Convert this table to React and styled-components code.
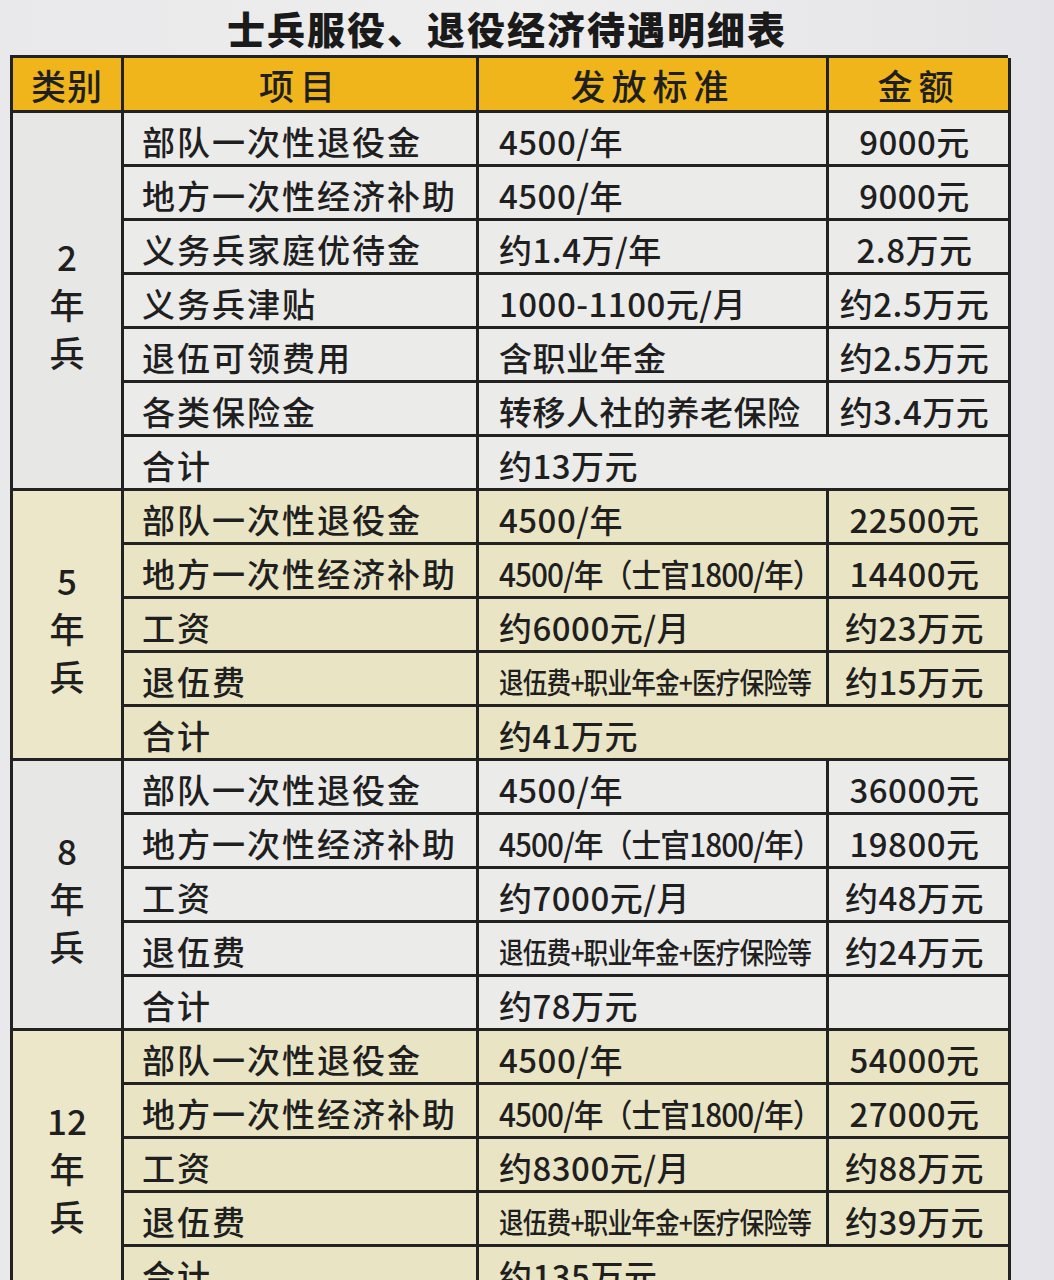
import React from 'react';
import styled, { createGlobalStyle } from 'styled-components';

const GlobalStyle = createGlobalStyle`
  html, body {
    margin: 0;
    padding: 0;
    height: 1280px;
    overflow: hidden;
    background: #e6e6e9;
  }
  body {
    font-family: "Noto Sans CJK SC", "Noto Sans", sans-serif;
    color: #1f1f1f;
  }
`;

const sections = [
  {
    label: ['2', '年', '兵'],
    tone: 'grey',
    rows: [
      ['部队一次性退役金', '4500/年', '9000元'],
      ['地方一次性经济补助', '4500/年', '9000元'],
      ['义务兵家庭优待金', '约1.4万/年', '2.8万元'],
      ['义务兵津贴', '1000-1100元/月', '约2.5万元'],
      ['退伍可领费用', '含职业年金', '约2.5万元'],
      ['各类保险金', '转移人社的养老保险', '约3.4万元'],
      ['合计', '约13万元', null],
    ],
  },
  {
    label: ['5', '年', '兵'],
    tone: 'khaki',
    rows: [
      ['部队一次性退役金', '4500/年', '22500元'],
      ['地方一次性经济补助', '4500/年（士官1800/年）', '14400元', 'compact'],
      ['工资', '约6000元/月', '约23万元'],
      ['退伍费', '退伍费+职业年金+医疗保险等', '约15万元', 'narrow'],
      ['合计', '约41万元', null],
    ],
  },
  {
    label: ['8', '年', '兵'],
    tone: 'grey',
    rows: [
      ['部队一次性退役金', '4500/年', '36000元'],
      ['地方一次性经济补助', '4500/年（士官1800/年）', '19800元', 'compact'],
      ['工资', '约7000元/月', '约48万元'],
      ['退伍费', '退伍费+职业年金+医疗保险等', '约24万元', 'narrow'],
      ['合计', '约78万元', ''],
    ],
  },
  {
    label: ['12', '年', '兵'],
    tone: 'khaki',
    rows: [
      ['部队一次性退役金', '4500/年', '54000元'],
      ['地方一次性经济补助', '4500/年（士官1800/年）', '27000元', 'compact'],
      ['工资', '约8300元/月', '约88万元'],
      ['退伍费', '退伍费+职业年金+医疗保险等', '约39万元', 'narrow'],
      ['合计', '约135万元', null],
    ],
  },
];

const tones = {
  grey: { cell: '#ebebea', label: '#e7e7e6' },
  khaki: { cell: '#e9e5c4', label: '#ebe7c8' },
};

export default function App() {
  return (
    <Page>
      <GlobalStyle />
      <Title>士兵服役、退役经济待遇明细表</Title>
      <Table>
        <HeadCell>类别</HeadCell>
        <HeadCell>项目</HeadCell>
        <HeadCell>发放标准</HeadCell>
        <HeadCell>金额</HeadCell>
        {sections.map((sec) => (
          <React.Fragment key={sec.label.join('')}>
            <LabelCell $rows={sec.rows.length} $bg={tones[sec.tone].label}>
              {sec.label.map((ch) => (
                <span key={ch}>{ch}</span>
              ))}
            </LabelCell>
            {sec.rows.map(([item, standard, amount, fit]) => (
              <React.Fragment key={item + standard}>
                <ItemCell $bg={tones[sec.tone].cell}>{item}</ItemCell>
                <StandardCell $bg={tones[sec.tone].cell} $span={amount === null}>
                  <Squeeze $fit={fit}>{standard}</Squeeze>
                </StandardCell>
                {amount !== null && (
                  <AmountCell $bg={tones[sec.tone].cell}>{amount}</AmountCell>
                )}
              </React.Fragment>
            ))}
          </React.Fragment>
        ))}
      </Table>
    </Page>
  );
}

const Page = styled.div`
  width: 1054px;
  padding: 0 0 0 10px;
  box-sizing: border-box;
  background: linear-gradient(90deg, #e9e9eb 0%, #eeeeee 50%, #e4e4e8 100%);
`;

const Title = styled.h1`
  margin: 0;
  height: 55px;
  padding-right: 50px;
  display: flex;
  align-items: center;
  justify-content: center;
  font-size: 38px;
  font-weight: 900;
  letter-spacing: 2px;
  color: #1a1a1a;
`;

const Table = styled.div`
  display: grid;
  width: 998px;
  grid-template-columns: 111px 355px 350px 182px;
  grid-template-rows: 55px;
  grid-auto-rows: 54px;
  border-left: 3px solid #222;
  border-top: 3px solid #222;
  box-sizing: border-box;
`;

const Cell = styled.div`
  display: flex;
  align-items: center;
  border-right: 3px solid #222;
  border-bottom: 3px solid #222;
  background: ${(p) => p.$bg || '#ebebea'};
  font-size: 33px;
  font-weight: 500;
  white-space: nowrap;
  overflow: hidden;
  min-width: 0;
`;

const HeadCell = styled(Cell)`
  background: #efb51a;
  justify-content: center;
  font-size: 35px;
  letter-spacing: 6px;
  &:first-child {
    letter-spacing: 1px;
  }
`;

const LabelCell = styled(Cell)`
  grid-row: span ${(p) => p.$rows};
  flex-direction: column;
  justify-content: center;
  font-size: 35px;
  line-height: 48px;
  padding-top: 6px;
  box-sizing: border-box;
`;

const ItemCell = styled(Cell)`
  padding-left: 18px;
  letter-spacing: 2px;
  padding-top: 4px;
`;

const StandardCell = styled(Cell)`
  grid-column: span ${(p) => (p.$span ? 2 : 1)};
  padding-left: 20px;
  letter-spacing: 0.5px;
  padding-top: 4px;
`;

const Squeeze = styled.span`
  display: inline-block;
  transform-origin: left center;
  font-size: ${(p) => (p.$fit === 'narrow' ? '29px' : p.$fit === 'compact' ? '32px' : '33px')};
  transform: ${(p) =>
    p.$fit === 'narrow' ? 'scaleX(0.85)' : p.$fit === 'compact' ? 'scaleX(0.93)' : 'none'};
  letter-spacing: ${(p) => (p.$fit ? '-1px' : '0.5px')};
`;

const AmountCell = styled(Cell)`
  justify-content: center;
  padding-top: 4px;
  padding-right: 8px;
  letter-spacing: 0.5px;
`;
